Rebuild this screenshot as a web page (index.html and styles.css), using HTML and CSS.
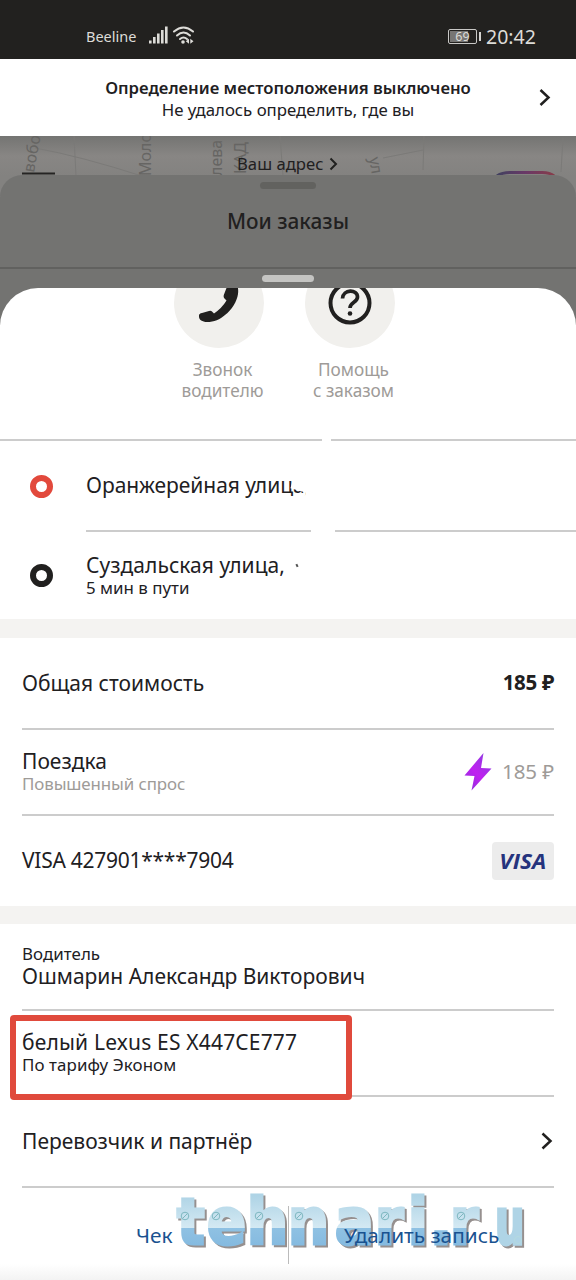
FILE: index.html
```html
<!DOCTYPE html>
<html lang="ru">
<head>
<meta charset="utf-8">
<title>Мои заказы</title>
<link rel="stylesheet" href="styles.css">
</head>
<body>
<div class="phone">
  <header class="status">
    <span class="carrier">Beeline</span>
    <svg class="signal" width="48" height="22" viewBox="0 0 48 22">
      <g fill="#dddcd8"><rect x="1" y="15.500" width="2.600" height="3"/><rect x="5" y="12" width="2.600" height="6.500"/><rect x="9" y="8.500" width="2.600" height="10"/><rect x="13" y="5" width="2.600" height="13.500"/><rect x="17" y="1.500" width="2.600" height="17"/></g>
      <g fill="none" stroke="#dddcd8" stroke-width="2" stroke-linecap="round"><path d="M26 6.500Q35.500-1.500 45 6.500"/><path d="M29 10.500Q35.500 4.500 42 10.500"/><path d="M32 14Q35.500 11 39 14"/></g>
      <circle cx="35" cy="17" r="1.800" fill="#dddcd8"/><path d="M41 13.800v5L37.800 16.300zM42.300 13.800v5L45.500 16.300z" fill="#dddcd8"/>
    </svg>
    <span class="battery"><span class="battery-level">69</span></span>
    <span class="clock">20:42</span>
  </header>
  <section class="banner">
    <div class="banner-text"><b class="banner-title">Определение местоположения выключено</b><span class="banner-sub">Не удалось определить, где вы</span></div>
    <svg class="banner-chevron" width="14" height="20" viewBox="0 0 14 20"><path d="M2.500 3 10.500 10.500 2.500 18" fill="none" stroke="#21201f" stroke-width="2.500"/></svg>
  </section>
  <section class="map">
    <svg class="streets" width="576" height="60" viewBox="0 0 576 60">
      <path d="M35 12Q80 20 145 41M424 0 423 34M383 22 423 14M563 2 561 36M74 0 76 40M280 0 283 40" fill="none" stroke="#7b7a78" stroke-width="1"/>
      <g class="street-name"><text transform="translate(34 37) rotate(-80)">вобо</text><text transform="translate(151 40) rotate(-90)">Моло</text><text transform="translate(222 40) rotate(-90)">лева</text><text transform="translate(246 38) rotate(-90)">КАД</text><text transform="translate(369 22) rotate(80)">ул</text></g>
      <path d="M22 37.500H55" stroke="#252423" stroke-width="2"/>
      <path d="M497 40Q502 36.500 510 36.500H542Q550 36.500 554 40" fill="none" stroke="url(#promo)" stroke-width="3"/>
      <defs><linearGradient id="promo"><stop offset="0" stop-color="#41415f"/><stop offset=".5" stop-color="#693867"/><stop offset="1" stop-color="#873d4a"/></linearGradient></defs>
    </svg>
    <div class="address"><span class="address-text">Ваш адрес</span><svg width="9" height="14" viewBox="0 0 9 14"><path d="M1.500 1.500 7 7 1.500 12.500" fill="none" stroke="#20201f" stroke-width="2"/></svg></div>
  </section>
  <section class="orders">
    <i class="orders-handle"></i>
    <h1 class="orders-title">Мои заказы</h1>
    <div class="orders-foot"><i class="sheet-handle"></i></div>
  </section>
  <main class="sheet">
    <section class="actions">
      <div class="action">
        <div class="disc"><svg width="90" height="90" viewBox="0 0 90 90"><path d="M61 24Q65 28 64 36C63 43 58 52 51 57C46 61.500 40 64 33 64C28 64 24.500 61.500 25 57.500Q25 55.500 28 55L35 53Q37 52.500 38 53.500L40 55.500Q48 50 52.500 42.500L50.500 40.500Q49 39 50 36.500L54 26Q57 22 61 24Z" fill="#21201f"/></svg></div>
        <div class="action-label">Звонок<br>водителю</div>
      </div>
      <div class="action">
        <div class="disc"><svg width="90" height="90" viewBox="0 0 90 90"><circle cx="45" cy="45" r="19.500" fill="none" stroke="#21201f" stroke-width="4"/><path d="M37.500 40.500C38 31 52.500 31 52.500 39C52.500 44.500 45 44 45 50" fill="none" stroke="#21201f" stroke-width="3.700"/><circle cx="45" cy="55.500" r="2.300" fill="#21201f"/></svg></div>
        <div class="action-label">Помощь<br>с заказом</div>
      </div>
    </section>
    <section class="stop stop-from">
      <i class="ring ring-red"></i>
      <div class="stop-body"><span class="title from-title">Оранжерейная улица,<i class="smudge"></i></span></div>
    </section>
    <section class="stop stop-to">
      <i class="ring"></i>
      <div class="stop-body"><span class="title to-title">Суздальская улица,<i class="speck"></i></span><span class="sub">5 мин в пути</span></div>
    </section>
    <div class="gap"></div>
    <section class="row total"><span class="title">Общая стоимость</span><b class="price price-total">185 ₽</b></section>
    <section class="row trip">
      <div class="stack"><span class="title">Поездка</span><span class="sub muted trip-sub">Повышенный спрос</span></div>
      <div class="surge"><svg width="28" height="40" viewBox="0 0 28 40"><defs><linearGradient id="bolt" x1="0" y1="1" x2=".8" y2="0"><stop offset="0" stop-color="#8635d8"/><stop offset=".5" stop-color="#c020f0"/><stop offset="1" stop-color="#8d3de0"/></linearGradient></defs><path d="M19.500 1 .5 23.500 10.500 24 7.500 38.500 27.500 16.500 17 16Z" fill="url(#bolt)"/></svg><span class="price muted">185 ₽</span></div>
    </section>
    <section class="row card"><span class="title card-title">VISA 427901****7904</span><span class="visa"><span class="visa-mark">VISA</span></span></section>
    <div class="gap gap-short"></div>
    <section class="row driver"><div class="stack"><span class="sub driver-sub">Водитель</span><span class="title">Ошмарин Александр Викторович</span></div></section>
    <section class="row car"><i class="highlight"></i><div class="stack"><span class="title car-title">белый Lexus ES X447CE777</span><span class="sub car-sub">По тарифу Эконом</span></div></section>
    <section class="row partner"><span class="title">Перевозчик и партнёр</span><svg class="partner-chevron" width="14" height="20" viewBox="0 0 14 20"><path d="M2.500 2.500 10.500 10 2.500 17.500" fill="none" stroke="#21201f" stroke-width="2.500"/></svg></section>
    <footer class="footer">
      <i class="divider"></i>
      <svg class="watermark" width="360" height="66" viewBox="0 0 360 66">
        <defs><linearGradient id="water" gradientUnits="userSpaceOnUse" x1="0" y1="5" x2="0" y2="58"><stop offset="0" stop-color="#afd4e6"/><stop offset=".6" stop-color="#d4e9f3"/><stop offset=".61" stop-color="#8fc1e3"/><stop offset="1" stop-color="#83b9df"/></linearGradient></defs>
        <g class="mark-shadow"><text x="3 33 73 114 161 201 234 256 276" y="55">tehnari.r</text><text transform="translate(321 55) scale(.72 1)">u</text></g>
        <g class="mark-face"><text x="1 31 71 112 159 199 232 254 274" y="53">tehnari.r</text><text transform="translate(319 53) scale(.72 1)">u</text></g>
        <g fill="none" stroke="#7db7c0" stroke-width="1"><circle cx="9" cy="25" r="3.800"/><path d="m6.500 27.500 5-5"/><circle cx="40" cy="25" r="3.800"/><path d="m37.500 27.500 5-5"/><circle cx="83" cy="25" r="3.800"/><path d="m80.500 27.500 5-5"/><circle cx="123" cy="25" r="3.800"/><path d="m120.500 27.500 5-5"/><circle cx="209" cy="25" r="3.800"/><path d="m206.500 27.500 5-5"/><circle cx="285" cy="25" r="3.800"/><path d="m282.500 27.500 5-5"/></g>
        <circle cx="342" cy="49" r="3.500" fill="none" stroke="#b4dae0"/>
      </svg>
      <a class="link receipt">Чек</a><a class="link remove">Удалить запись</a>
    </footer>
  </main>
</div>
</body>
</html>
```
FILE: styles.css
```css
* { box-sizing: border-box; }
body { margin: 0; background: #fff; color: #21201f; font-family: "Noto Sans", "Open Sans", sans-serif; }
.phone { width: 576px; height: 1280px; overflow: hidden; display: flex; flex-direction: column; }
.phone > * { flex: none; }
svg { display: block; flex: none; }
span, b, a { white-space: nowrap; }

.status { height: 59px; background: #22211f; color: #dddcd8; display: flex; align-items: center; padding: 14px 38px 0 86px; }
.carrier { font-size: 14.500px; width: 62px; margin-top: -2px; }
.signal { margin-top: -1px; }
.battery { margin-left: auto; width: 29px; height: 15px; border: 1.500px solid #c9c8c6; border-radius: 2px; padding: 1px; position: relative; }
.battery::after { content: ""; position: absolute; right: -5px; top: 2px; width: 2px; height: 9px; background: #d5d4d2; }
.battery-level { display: block; height: 100%; background: linear-gradient(90deg, #777674 72%, transparent 72%); font-size: 12.500px; line-height: 11px; text-align: center; }
.clock { font-size: 19.500px; margin-left: 9px; width: 52px; }

.banner { height: 77px; display: flex; align-items: center; position: relative; }
.banner-text { flex: 1; display: flex; flex-direction: column; align-items: center; line-height: 22px; padding-top: 2px; }
.banner-title { font-size: 16.700px; font-weight: 600; }
.banner-sub { font-size: 16.800px; }
.banner-chevron { position: absolute; left: 538px; top: 28px; }

.map { height: 60px; margin-bottom: -21px; background: linear-gradient(#747472, #888684 20px, #838280 40px); position: relative; }
.streets { position: absolute; inset: 0; }
.street-name { font-size: 16px; fill: #666563; }
.address { position: relative; display: flex; align-items: center; gap: 6px; padding: 17px 0 0 237px; line-height: 22px; font-size: 16.700px; }

.orders { position: relative; height: 150px; background: #737371; border-radius: 22px 22px 0 0; display: flex; flex-direction: column; align-items: center; margin-bottom: -37px; }
.orders-handle { width: 56px; height: 7px; border-radius: 4px; background: #62625f; margin-top: 7px; }
.orders-title { margin: 17px 0 0; font-size: 20.800px; line-height: 30px; font-weight: 500; }
.orders-foot { align-self: stretch; margin-top: 31px; border-top: 2px solid #61615f; padding-top: 6px; display: flex; justify-content: center; }
.sheet-handle { width: 52px; height: 7px; border-radius: 4px; background: #c4c4c2; }

.sheet { position: relative; height: 992px; background: #fff; border-radius: 38px 38px 0 0; overflow: hidden; display: flex; flex-direction: column; }
.sheet > * { flex: none; }
.actions { height: 151px; display: flex; justify-content: center; gap: 41px; padding-right: 7px; }
.action { width: 90px; display: flex; flex-direction: column; align-items: center; }
.disc { margin-top: -30px; width: 90px; height: 90px; border-radius: 50%; background: #f1f0ed; }
.action-label { margin: 12px 0 0 7px; font-size: 17.200px; line-height: 20.500px; color: #9e9b98; text-align: center; white-space: nowrap; }

.stop { display: flex; align-items: center; padding-left: 30px; gap: 33px; position: relative; }
.stop::before { content: ""; position: absolute; top: 0; left: 0; right: 0; height: 2px; background: linear-gradient(90deg, #ccc 322px, #fff 322px, #fff 331px, #ccc 331px); }
.stop-from { height: 91px; padding-top: 3px; }
.stop-to { height: 89px; padding-top: 2px; }
.stop-to::before { left: 86px; background: linear-gradient(90deg, #ccc 225px, #fff 225px, #fff 249px, #ccc 249px); }
.ring { width: 23px; height: 23px; border: 6px solid #21201f; border-radius: 50%; }
.ring-red { border-color: #e2493c; }
.stop-body, .stack { display: flex; flex-direction: column; align-items: flex-start; }
.stop-body { margin-top: -1px; }
.title { font-size: 21px; line-height: 25px; position: relative; }
.sub { font-size: 16.900px; line-height: 20px; }
.from-title { margin-top: -1px; letter-spacing: -.05px; }
.to-title { letter-spacing: .05px; }
.smudge { position: absolute; left: 206px; top: 4px; width: 26px; height: 15px; background: #fff; transform: rotate(16deg); }
.smudge::after { content: ""; position: absolute; left: 16px; top: 8px; width: 10px; height: 14px; background: #fff; }
.speck { position: absolute; left: 210px; top: 11px; width: 2px; height: 3px; background: #555; transform: rotate(-25deg); }
.muted { color: #9e9b98; }
.trip-sub { letter-spacing: -.1px; }

.gap { height: 19px; background: #f4f3f1; }
.gap-short { height: 18px; }
.row { margin: 0 22px; padding-bottom: 1px; display: flex; align-items: center; justify-content: space-between; position: relative; }
.row + .row { border-top: 2px solid #ccc; }
.row > .stack { margin-top: -1px; }
.total { height: 90px; padding-bottom: 0; }
.price { font-size: 20.500px; line-height: 26px; margin-top: -2px; letter-spacing: -.1px; }
.price-total { font-weight: 700; letter-spacing: -.3px; }
.trip { height: 86px; }
.surge { display: flex; align-items: center; gap: 10px; }
.card { height: 92px; }
.card-title { letter-spacing: -.27px; }
.visa { width: 62px; height: 38px; border-radius: 4px; background: #ececec; display: flex; align-items: center; justify-content: center; }
.visa-mark { font: italic 700 21px "Open Sans", sans-serif; color: #25337d; transform: scaleX(1.08); }
.driver { height: 85px; }
.driver > .stack { margin-top: 0; }
.driver-sub { letter-spacing: .05px; }
.car { height: 86px; }
.car-title { letter-spacing: .18px; }
.car-sub { letter-spacing: .1px; }
.highlight { position: absolute; left: -12px; top: 4px; width: 342px; height: 85px; border: 6px solid #e04a3c; border-radius: 4px; z-index: 1; }
.partner { height: 91px; }
.footer { height: 94px; position: relative; margin-left: 22px; width: 532px; border-top: 2px solid #ccc; display: flex; align-items: flex-start; padding: 31px 0 0 114px; }
.footer::after { content: ""; position: absolute; left: -22px; right: -22px; bottom: 0; height: 16px; background: linear-gradient(rgba(240,240,240,0), #f3f3f3); }
.link { position: relative; font-size: 20.800px; line-height: 32px; color: #195290; }
.receipt { width: 152px; }
.divider { position: absolute; left: 266px; top: 18px; width: 1px; height: 58px; background: #bbb; }
.remove { margin-left: 56px; }
.watermark { position: absolute; left: 154px; top: 3px; }
.watermark text { font: bold 64px "DejaVu Sans Condensed", "DejaVu Sans", sans-serif; font-stretch: condensed; stroke-width: 3px; stroke-linejoin: miter; }
.mark-shadow { fill: #96908f; stroke: #96908f; }
.mark-face { fill: url(#water); stroke: url(#water); }
```
